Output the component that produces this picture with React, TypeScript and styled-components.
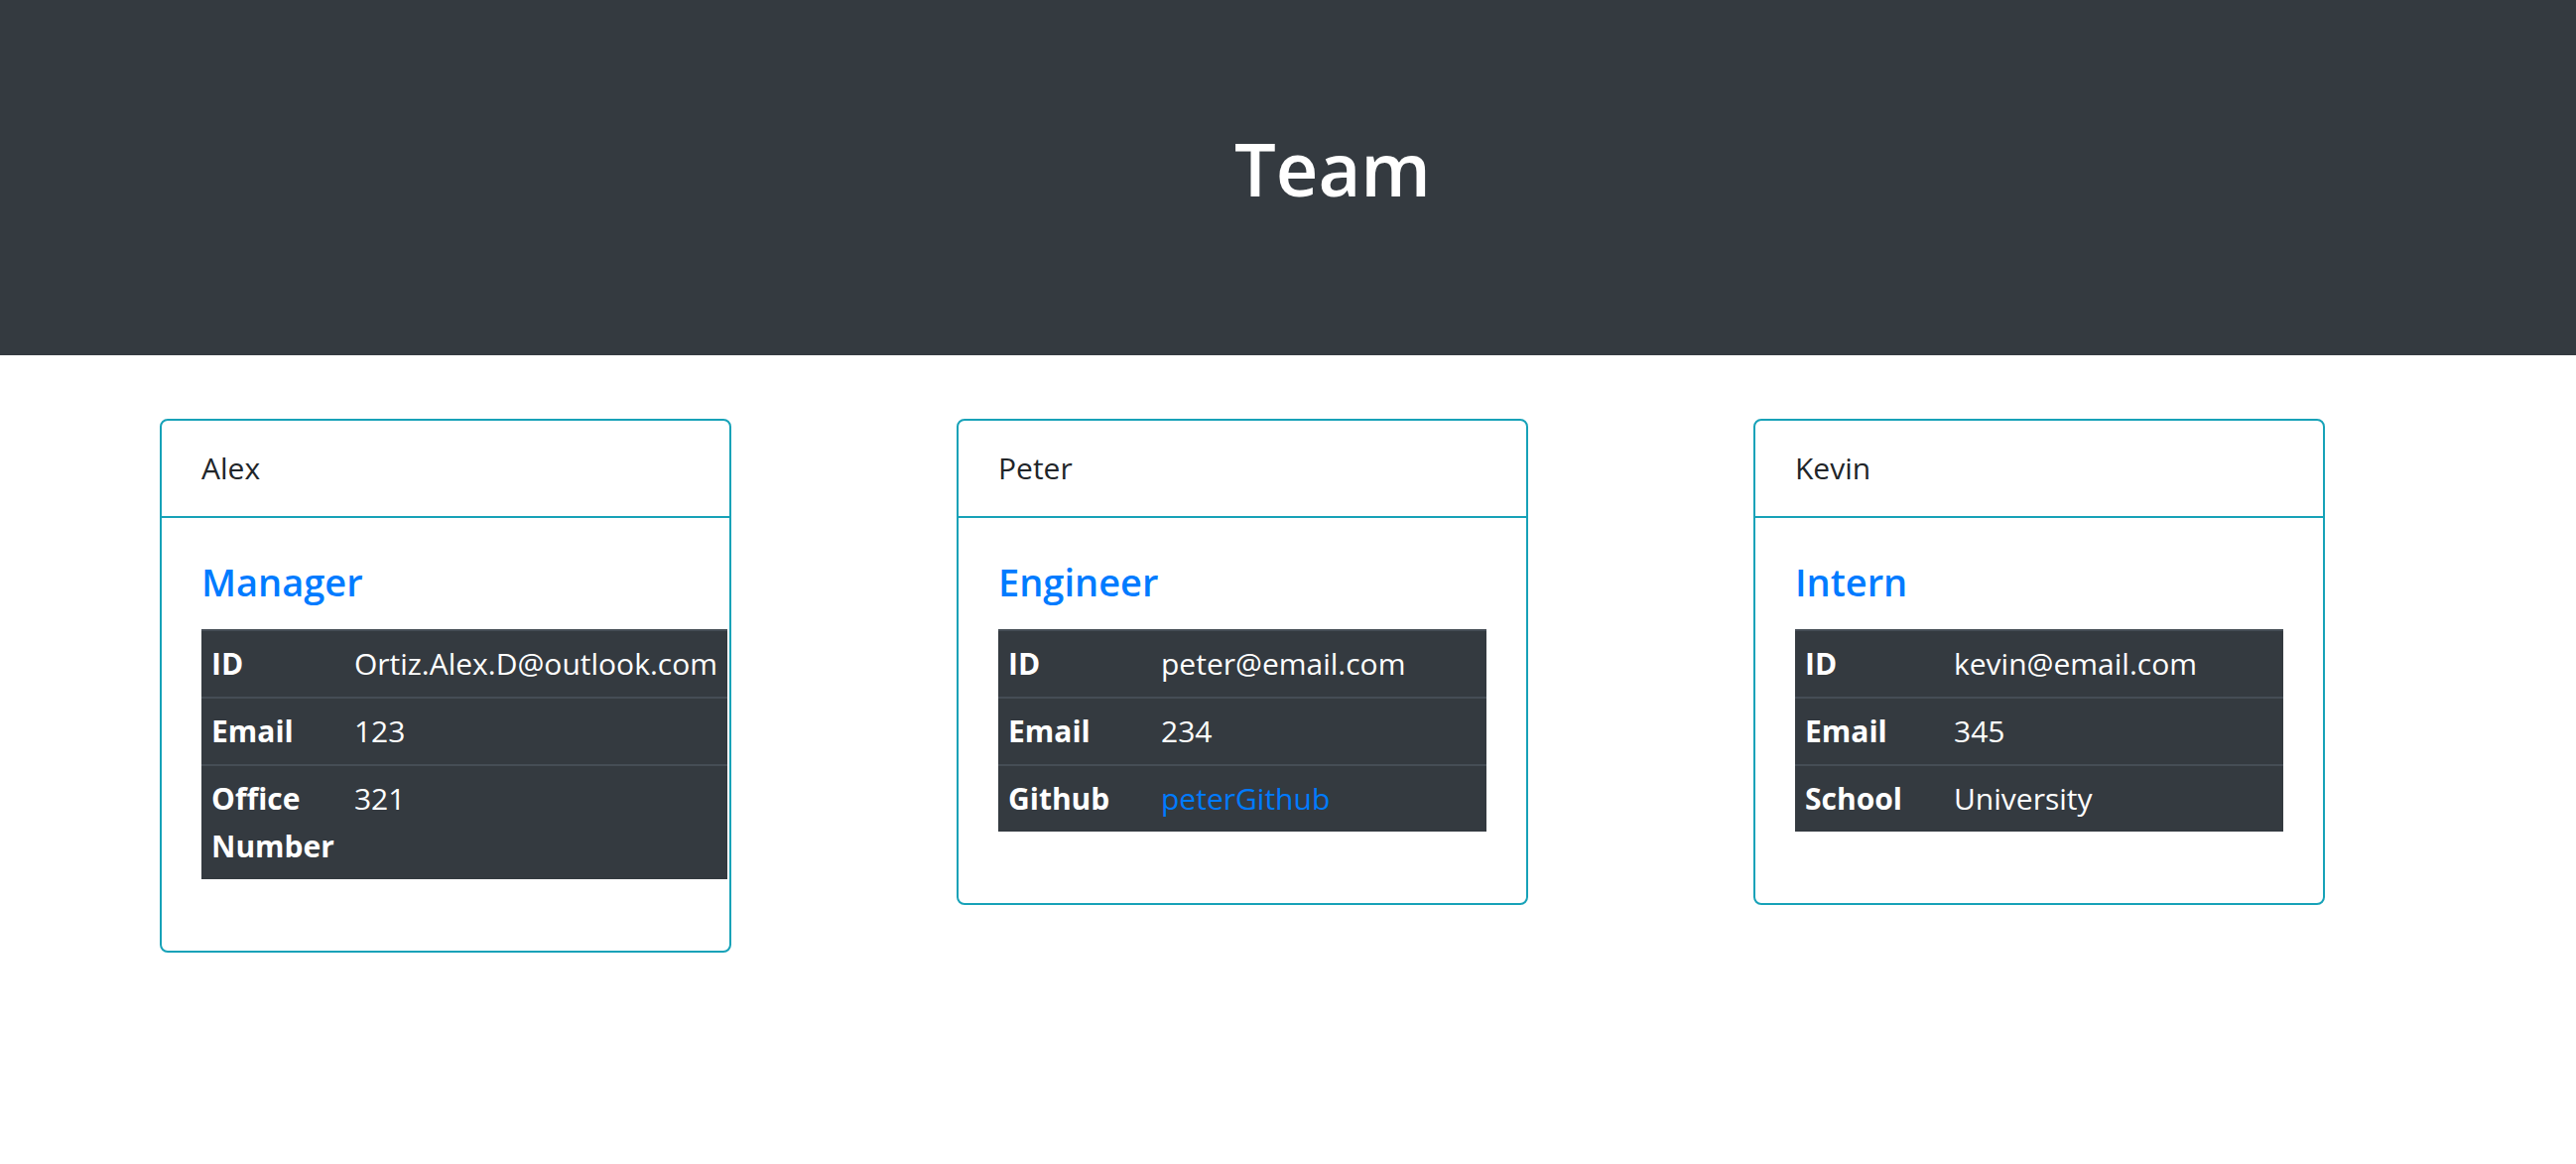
import styled, { createGlobalStyle } from "styled-components";

const GlobalStyle = createGlobalStyle`
  html, body {
    margin: 0;
    padding: 0;
    background: #ffffff;
  }
  body {
    font-family: "Open Sans", "Noto Sans", sans-serif;
    color: #212529;
  }
  * {
    box-sizing: border-box;
  }
`;

const Banner = styled.header`
  height: 358px;
  background-color: #343a40;
  padding-top: 122px;
`;

const BannerTitle = styled.h1`
  margin: 0;
  padding-left: 90px;
  text-align: center;
  font-size: 74px;
  line-height: 96px;
  font-weight: 600;
  color: #ffffff;
`;

const CardRow = styled.main`
  display: flex;
  align-items: flex-start;
  gap: 227px;
  padding: 64px 0 0 161px;
`;

const Card = styled.section`
  width: 576px;
  border: 2px solid #17a2b8;
  border-radius: 8px;
  background: #ffffff;
`;

const CardHeader = styled.div`
  padding: 24px 40px;
  font-size: 30px;
  line-height: 48px;
  border-bottom: 2px solid #17a2b8;
`;

const CardBody = styled.div`
  padding: 40px;
`;

const Role = styled.h5`
  margin: 0 0 24px;
  font-size: 38px;
  line-height: 48px;
  font-weight: 600;
  color: #007bff;
`;

const InfoTable = styled.table`
  width: 100%;
  margin-bottom: 32px;
  border-collapse: collapse;
  background-color: #343a40;
  color: #ffffff;
  font-size: 30px;
  line-height: 48px;
`;

const Label = styled.th<{ $width: number }>`
  width: ${({ $width }) => $width}px;
  padding: 9px 10px;
  text-align: left;
  vertical-align: top;
  font-weight: 700;
  border-top: 2px solid #454d55;
`;

const Value = styled.td`
  padding: 9px 10px;
  vertical-align: top;
  border-top: 2px solid #454d55;
`;

const GithubLink = styled.a`
  color: #007bff;
  text-decoration: none;
`;

type Row = { label: string; value: string; link?: boolean };

type Member = {
  name: string;
  role: string;
  labelWidth: number;
  rows: Row[];
};

const team: Member[] = [
  {
    name: "Alex",
    role: "Manager",
    labelWidth: 143,
    rows: [
      { label: "ID", value: "Ortiz.Alex.D@outlook.com" },
      { label: "Email", value: "123" },
      { label: "Office Number", value: "321" },
    ],
  },
  {
    name: "Peter",
    role: "Engineer",
    labelWidth: 154,
    rows: [
      { label: "ID", value: "peter@email.com" },
      { label: "Email", value: "234" },
      { label: "Github", value: "peterGithub", link: true },
    ],
  },
  {
    name: "Kevin",
    role: "Intern",
    labelWidth: 150,
    rows: [
      { label: "ID", value: "kevin@email.com" },
      { label: "Email", value: "345" },
      { label: "School", value: "University" },
    ],
  },
];

const MemberCard = ({ member }: { member: Member }) => (
  <Card>
    <CardHeader>{member.name}</CardHeader>
    <CardBody>
      <Role>{member.role}</Role>
      <InfoTable>
        <tbody>
          {member.rows.map((row) => (
            <tr key={row.label}>
              <Label $width={member.labelWidth}>{row.label}</Label>
              <Value>
                {row.link ? (
                  <GithubLink href="#">{row.value}</GithubLink>
                ) : (
                  row.value
                )}
              </Value>
            </tr>
          ))}
        </tbody>
      </InfoTable>
    </CardBody>
  </Card>
);

const App = () => {
  return (
    <>
      <GlobalStyle />
      <Banner>
        <BannerTitle>Team</BannerTitle>
      </Banner>
      <CardRow>
        {team.map((member) => (
          <MemberCard key={member.name} member={member} />
        ))}
      </CardRow>
    </>
  );
};

export default App;
